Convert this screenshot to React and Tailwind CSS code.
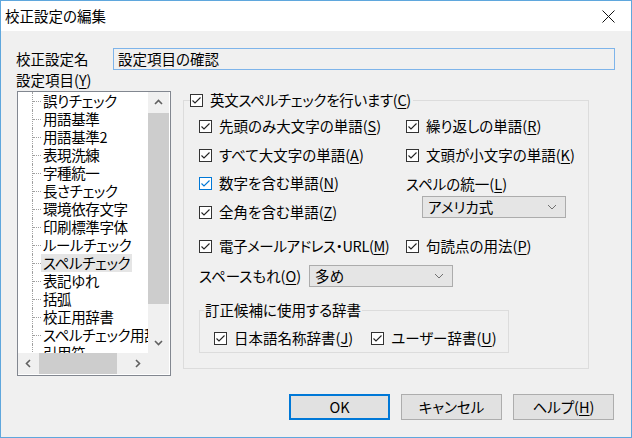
import React from 'react';

const treeItems = [
  '誤りチェック',
  '用語基準',
  '用語基準2',
  '表現洗練',
  '字種統一',
  '長さチェック',
  '環境依存文字',
  '印刷標準字体',
  'ルールチェック',
  'スペルチェック',
  '表記ゆれ',
  '括弧',
  '校正用辞書',
  'スペルチェック用辞書',
  '引用符',
];

const Check = ({ blue }) => (
  <span
    className={`w-[13px] h-[13px] shrink-0 bg-white border flex items-center justify-center ${
      blue ? 'border-[#0078d7]' : 'border-[#333333]'
    }`}
  >
    <svg width="11" height="11" viewBox="0 0 11 11">
      <polyline
        points="1.5,5.5 4,8 9.5,2.5"
        fill="none"
        stroke={blue ? '#0078d7' : '#222222'}
        strokeWidth="1.1"
      />
    </svg>
  </span>
);

// label with underlined access key, e.g. ('先頭のみ大文字の単語', 'S')
const Label = ({ text, hotkey }) => (
  <span className="whitespace-nowrap">
    {text}
    {hotkey && (
      <>
        (<span className="underline underline-offset-[2px]">{hotkey}</span>)
      </>
    )}
  </span>
);

const CheckRow = ({ text, hotkey, blue, className = '' }) => (
  <div className={`flex items-center gap-[7px] h-[18px] ${className}`}>
    <Check blue={blue} />
    <Label text={text} hotkey={hotkey} />
  </div>
);

const Chevron = ({ dir, color = '#606060', size = 9 }) => {
  const pts = {
    up: '1,6 4.5,2.5 8,6',
    down: '1,3 4.5,6.5 8,3',
    left: '6,1 2.5,4.5 6,8',
    right: '3,1 6.5,4.5 3,8',
  }[dir];
  return (
    <svg width={size} height={size} viewBox="0 0 9 9">
      <polyline points={pts} fill="none" stroke={color} strokeWidth="1.6" />
    </svg>
  );
};

const Combo = ({ value, className = '' }) => (
  <div
    className={`h-[22px] bg-[#e5e5e5] border border-[#acacac] flex items-center justify-between pl-[5px] pr-[8px] ${className}`}
  >
    <span>{value}</span>
    <svg width="10" height="6" viewBox="0 0 10 6">
      <polyline points="1,1 5,5 9,1" fill="none" stroke="#707070" strokeWidth="1" />
    </svg>
  </div>
);

const TreeBox = () => (
  <div className="w-[154px] h-[285px] ml-[1px] border border-[#828790] bg-white grid grid-cols-[130px_21px] grid-rows-[261px_21px]">
    {/* items */}
    <div className="overflow-hidden">
      {treeItems.map((item, i) => (
        <div key={item} className="flex h-[18px] items-stretch">
          <div className="w-[14px] shrink-0" />
          <div className="w-[9px] shrink-0 border-l border-dotted border-[#a0a0a0] flex items-center">
            <div className="w-full border-t border-dotted border-[#a0a0a0]" />
          </div>
          <div
            className={`px-[2px] leading-[18px] whitespace-nowrap tracking-[-0.4px] ${
              i === 9 ? 'bg-[#e5e5e5]' : ''
            }`}
          >
            {item}
          </div>
        </div>
      ))}
    </div>
    {/* vertical scrollbar */}
    <div className="bg-[#f0f0f0] flex flex-col">
      <div className="h-[21px] flex items-center justify-center">
        <Chevron dir="up" />
      </div>
      <div className="h-[191px] bg-[#cdcdcd]" />
      <div className="flex-1" />
      <div className="h-[21px] flex items-center justify-center">
        <Chevron dir="down" />
      </div>
    </div>
    {/* horizontal scrollbar */}
    <div className="bg-[#f0f0f0] flex items-stretch">
      <div className="w-[21px] flex items-center justify-center">
        <Chevron dir="left" />
      </div>
      <div className="w-[78px] bg-[#cdcdcd]" />
      <div className="flex-1" />
      <div className="w-[21px] flex items-center justify-center">
        <Chevron dir="right" />
      </div>
    </div>
    <div className="bg-[#f0f0f0]" />
  </div>
);

const SpellGroup = () => (
  <fieldset className="w-[406px] ml-[12px] border border-[#dcdcdc] p-0">
    <legend className="ml-[6px] pr-[2px]">
      <CheckRow text="英文スペルチェックを行います" hotkey="C" className="tracking-[-0.3px]" />
    </legend>
    <div className="pl-[15px] pb-[15px]">
      <div className="flex mt-[8px]">
        <div className="w-[207px] flex flex-col">
          <CheckRow text="先頭のみ大文字の単語" hotkey="S" />
          <CheckRow text="すべて大文字の単語" hotkey="A" className="mt-[11px]" />
          <CheckRow text="数字を含む単語" hotkey="N" blue className="mt-[10px]" />
          <CheckRow text="全角を含む単語" hotkey="Z" className="mt-[11px]" />
          <CheckRow text="電子メールアドレス・URL" hotkey="M" className="mt-[16px] tracking-[-0.4px]" />
        </div>
        <div className="flex flex-col">
          <CheckRow text="繰り返しの単語" hotkey="R" />
          <CheckRow text="文頭が小文字の単語" hotkey="K" className="mt-[11px]" />
          <div className="h-[18px] leading-[18px] mt-[11px]">
            <Label text="スペルの統一" hotkey="L" />
          </div>
          <Combo value="アメリカ式" className="w-[144px] ml-[16px] mt-[3px]" />
          <CheckRow text="句読点の用法" hotkey="P" className="mt-[19px]" />
        </div>
      </div>
      <div className="flex items-center mt-[10px]">
        <div className="w-[110px]">
          <Label text="スペースもれ" hotkey="O" />
        </div>
        <Combo value="多め" className="w-[144px]" />
      </div>
      <fieldset className="w-[310px] mt-[14px] border border-[#dcdcdc] p-0">
        <legend className="ml-[4px] px-[1px] leading-[18px]">訂正候補に使用する辞書</legend>
        <div className="flex items-center mt-[10px] mb-[5px] ml-[14px] gap-[18px]">
          <CheckRow text="日本語名称辞書" hotkey="J" />
          <CheckRow text="ユーザー辞書" hotkey="U" />
        </div>
      </fieldset>
    </div>
  </fieldset>
);

const Button = ({ children, primary }) => (
  <button
    className={`w-[101px] h-[26px] bg-[#e1e1e1] flex items-center justify-center ${
      primary ? 'border-2 border-[#0078d7]' : 'border border-[#adadad]'
    }`}
  >
    {children}
  </button>
);

export default function App() {
  return (
    <div className="w-[632px] h-[438px] flex flex-col border border-[#5fa7dd] bg-[#f0f0f0] text-[14.5px] text-black font-['Noto_Sans_CJK_JP',sans-serif] [font-feature-settings:'palt'] leading-[18px]">
      {/* title bar */}
      <div className="h-[30px] bg-white flex items-center justify-between pl-[4px] pr-[16px]">
        <span>校正設定の編集</span>
        <svg width="13" height="13" viewBox="0 0 13 13">
          <path d="M0.5 0.5 L12.5 12.5 M12.5 0.5 L0.5 12.5" stroke="#111" strokeWidth="1" />
        </svg>
      </div>

      <div className="flex-1 flex flex-col pl-[15px] pr-[16px]">
        <div className="flex items-center mt-[17px] h-[22px]">
          <span className="w-[97px]">校正設定名</span>
          <div className="flex-1 h-[22px] border border-[#7eb4ea] bg-[#f0f0f0] flex items-center pl-[4px]">
            設定項目の確認
          </div>
        </div>
        <div className="mt-[1px] h-[18px]">
          <Label text="設定項目" hotkey="Y" />
        </div>

        <div className="flex items-start mt-[2px]">
          <TreeBox />
          <SpellGroup />
        </div>

        <div className="flex justify-end gap-[11px] mt-auto mb-[17px] pr-[1px]">
          <Button primary>OK</Button>
          <Button>キャンセル</Button>
          <Button>
            <Label text="ヘルプ" hotkey="H" />
          </Button>
        </div>
      </div>
    </div>
  );
}
